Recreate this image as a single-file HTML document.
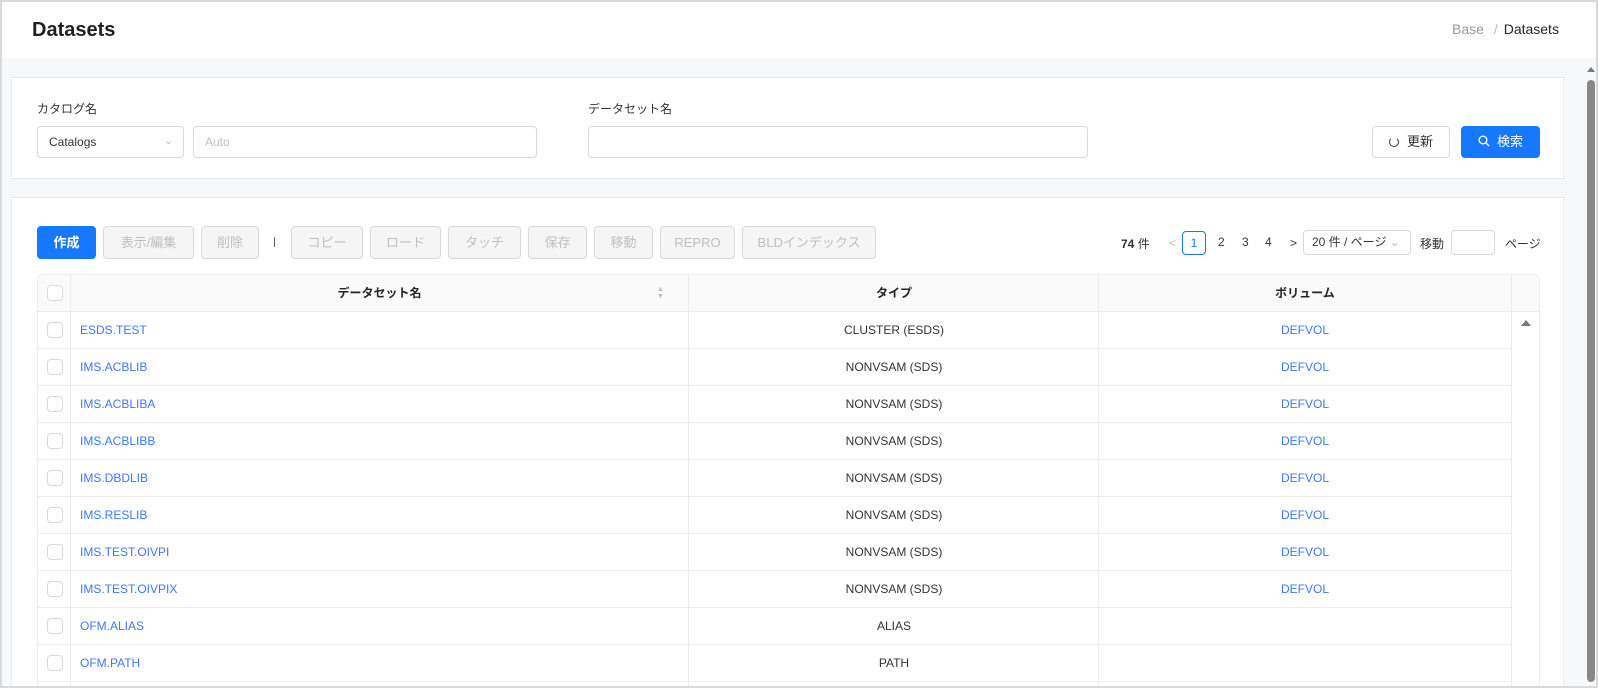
<!DOCTYPE html>
<html><head><meta charset="utf-8">
<style>
*{box-sizing:border-box;margin:0;padding:0}
body{width:1598px;height:688px;overflow:hidden;background:#d9d9d9;font-family:"Liberation Sans","Noto Sans CJK JP",sans-serif;color:#262626;position:relative}
.a{position:absolute}
#frame{left:2px;top:2px;width:1594px;height:684px;background:#f7f8fa;overflow:hidden}
#hdr{left:0;top:0;width:1594px;height:56px;background:#fff}
.card{background:#fff;border:1px solid #ececec}
.lbl{font-size:12px;color:#333}
.inp{border:1px solid #d9d9d9;border-radius:4px;background:#fff;font-size:12px;padding-left:11px;line-height:30px}
.btn{border:1px solid #d9d9d9;border-radius:4px;background:#f5f5f5;color:#bfbfbf;font-size:13px;text-align:center;line-height:31px;height:33px}
.pri{background:#1677ff;border-color:#1677ff;color:#fff;font-weight:bold}
.pg{font-size:12px;color:#333}
.row{left:0;width:1502px;height:37px;border-bottom:1px solid #ececec}
.cb{width:16px;height:16px;border:1px solid #d9d9d9;border-radius:4px;background:#fff;position:absolute;left:9px;top:10px}
.nm{position:absolute;left:42px;top:0;line-height:36px;font-size:12px;color:#3c78ff}
.tp{position:absolute;left:651px;width:410px;text-align:center;line-height:36px;font-size:12px;color:#333}
.vl{position:absolute;left:1061px;width:412px;text-align:center;line-height:36px;font-size:12px;color:#3c78ff}
.vline{position:absolute;top:0;width:1px;background:#ececec}
</style></head><body>
<div id="frame" class="a">
 <div id="hdr" class="a">
  <div class="a" style="left:30px;top:17px;font-size:20px;font-weight:bold;color:#1f1f1f">Datasets</div>
  <div class="a" style="left:1450px;top:19px;font-size:14px;color:#999">Base <span style="margin:0 6px;color:#bbb">/</span><span style="color:#262626">Datasets</span></div>
 </div>
 <div class="a card" style="left:9px;top:75px;width:1553px;height:102px">
  <div class="a lbl" style="left:25px;top:22px">カタログ名</div>
  <div class="a inp" style="left:25px;top:48px;width:147px;height:32px;color:#333">Catalogs<span style="position:absolute;right:10px;top:-1px;color:#bbb;font-size:11px">&#8964;</span></div>
  <div class="a inp" style="left:181px;top:48px;width:344px;height:32px;color:#bfbfbf">Auto</div>
  <div class="a lbl" style="left:576px;top:22px">データセット名</div>
  <div class="a inp" style="left:576px;top:48px;width:500px;height:32px"></div>
  <div class="a btn" style="left:1360px;top:48px;width:78px;height:32px;background:#fff;color:#333;line-height:30px"><span style="display:inline-block;width:10px;height:10px;border:1.5px solid #333;border-top-color:transparent;border-radius:50%;margin-right:8px;vertical-align:-1px"></span>更新</div>
  <div class="a btn pri" style="left:1449px;top:48px;width:79px;height:32px;line-height:30px;font-weight:normal">
   <svg width="12" height="12" viewBox="0 0 12 12" style="vertical-align:-1px;margin-right:7px"><circle cx="5" cy="5" r="3.8" stroke="#fff" stroke-width="1.4" fill="none"/><path d="M8 8l3 3" stroke="#fff" stroke-width="1.4"/></svg>検索</div>
 </div>
 <div class="a card" style="left:9px;top:195px;width:1553px;height:520px">
  <div class="a btn pri" style="left:25px;top:28px;width:59px">作成</div>
  <div class="a btn" style="left:91px;top:28px;width:91px">表示/編集</div>
  <div class="a btn" style="left:189px;top:28px;width:58px">削除</div>
  <div class="a" style="left:262px;top:39px;width:1px;height:10px;background:#666"></div>
  <div class="a btn" style="left:279px;top:28px;width:72px">コピー</div>
  <div class="a btn" style="left:358px;top:28px;width:71px">ロード</div>
  <div class="a btn" style="left:436px;top:28px;width:73px">タッチ</div>
  <div class="a btn" style="left:516px;top:28px;width:59px">保存</div>
  <div class="a btn" style="left:582px;top:28px;width:59px">移動</div>
  <div class="a btn" style="left:648px;top:28px;width:75px">REPRO</div>
  <div class="a btn" style="left:730px;top:28px;width:134px">BLDインデックス</div>
  <div class="a pg" style="left:1109px;top:37px"><b>74</b> 件</div>
  <div class="a pg" style="left:1157px;top:38px;color:#bbb">&lt;</div>
  <div class="a pg" style="left:1170px;top:33px;width:24px;height:24px;border:1px solid #1677ff;border-radius:4px;text-align:center;line-height:22px;color:#1677ff">1</div>
  <div class="a pg" style="left:1206px;top:37px">2</div>
  <div class="a pg" style="left:1230px;top:37px">3</div>
  <div class="a pg" style="left:1253px;top:37px">4</div>
  <div class="a pg" style="left:1278px;top:38px">&gt;</div>
  <div class="a pg inp" style="left:1291px;top:32px;width:108px;height:25px;line-height:23px;padding-left:8px">20 件 / ページ <span style="color:#bbb">&#8964;</span></div>
  <div class="a pg" style="left:1408px;top:37px">移動</div>
  <div class="a inp" style="left:1439px;top:32px;width:44px;height:25px"></div>
  <div class="a pg" style="left:1493px;top:37px">ページ</div>
  <div class="a" style="left:25px;top:76px;width:1503px;height:440px;border:1px solid #ececec;border-radius:6px 6px 0 0;overflow:hidden">
   <div class="a" style="left:0;top:0;width:1502px;height:37px;background:#fafafa;border-bottom:1px solid #ececec;font-size:12px;font-weight:bold;line-height:36px">
    <div class="cb"></div>
    <div class="a" style="left:32px;width:619px;text-align:center">データセット名</div>
    <div class="a" style="left:619px;top:11px;font-size:7px;line-height:7px;color:#bbb">▲<br>▼</div>
    <div class="a" style="left:651px;width:410px;text-align:center">タイプ</div>
    <div class="a" style="left:1061px;width:412px;text-align:center">ボリューム</div>
   </div>
   <div class="a" style="left:0;top:37px">
    <div class="a row" style="top:0"><div class="cb"></div><div class="nm">ESDS.TEST</div><div class="tp">CLUSTER (ESDS)</div><div class="vl">DEFVOL</div></div>
    <div class="a row" style="top:37px"><div class="cb"></div><div class="nm">IMS.ACBLIB</div><div class="tp">NONVSAM (SDS)</div><div class="vl">DEFVOL</div></div>
    <div class="a row" style="top:74px"><div class="cb"></div><div class="nm">IMS.ACBLIBA</div><div class="tp">NONVSAM (SDS)</div><div class="vl">DEFVOL</div></div>
    <div class="a row" style="top:111px"><div class="cb"></div><div class="nm">IMS.ACBLIBB</div><div class="tp">NONVSAM (SDS)</div><div class="vl">DEFVOL</div></div>
    <div class="a row" style="top:148px"><div class="cb"></div><div class="nm">IMS.DBDLIB</div><div class="tp">NONVSAM (SDS)</div><div class="vl">DEFVOL</div></div>
    <div class="a row" style="top:185px"><div class="cb"></div><div class="nm">IMS.RESLIB</div><div class="tp">NONVSAM (SDS)</div><div class="vl">DEFVOL</div></div>
    <div class="a row" style="top:222px"><div class="cb"></div><div class="nm">IMS.TEST.OIVPI</div><div class="tp">NONVSAM (SDS)</div><div class="vl">DEFVOL</div></div>
    <div class="a row" style="top:259px"><div class="cb"></div><div class="nm">IMS.TEST.OIVPIX</div><div class="tp">NONVSAM (SDS)</div><div class="vl">DEFVOL</div></div>
    <div class="a row" style="top:296px"><div class="cb"></div><div class="nm">OFM.ALIAS</div><div class="tp">ALIAS</div></div>
    <div class="a row" style="top:333px"><div class="cb"></div><div class="nm">OFM.PATH</div><div class="tp">PATH</div></div>
   </div>
   <div class="vline" style="left:32px;height:440px"></div>
   <div class="vline" style="left:650px;height:440px"></div>
   <div class="vline" style="left:1060px;height:440px"></div>
   <div class="vline" style="left:1473px;height:440px"></div>
   <div class="a" style="left:1474px;top:37px;width:28px;height:400px;background:#fff"></div>
   <div class="a" style="left:1483px;top:45px;width:0;height:0;border-left:5px solid transparent;border-right:5px solid transparent;border-bottom:6px solid #777"></div>
  </div>
 </div>
 <div class="a" style="left:1576px;top:56px;width:18px;height:630px;background:#f7f8fa"></div>
 <div class="a" style="left:1585px;top:65px;width:0;height:0;border-left:4px solid transparent;border-right:4px solid transparent;border-bottom:5px solid #777"></div>
 <div class="a" style="left:1585px;top:78px;width:8px;height:602px;background:#888;border-radius:4px"></div>
</div>
</body></html>
